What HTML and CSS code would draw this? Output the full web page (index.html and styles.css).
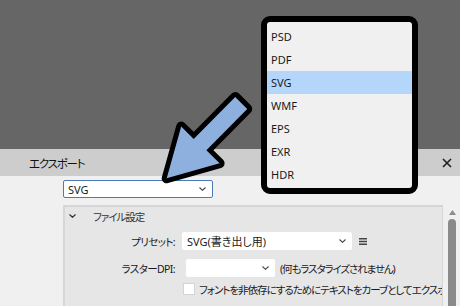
FILE: index.html
```html
<!DOCTYPE html>
<html lang="ja">
<head>
    <meta charset="UTF-8">
    <meta name="viewport" content="width=device-width, initial-scale=1.0">
    <title>エクスポート</title>
    <link rel="stylesheet" href="styles.css">
</head>
<body>
    <div class="backdrop"></div>
    <div class="dialog">
        <div class="titlebar">
            <span class="title">エクスポート</span>
            <svg class="close" width="10" height="10" viewBox="0 0 10 10">
                <path d="M1 1 L9 9 M9 1 L1 9" stroke="#1e1e1e" stroke-width="1.6"/>
            </svg>
        </div>
        <div class="content">
            <div class="select format">
                <span>SVG</span>
                <svg class="chev" width="7" height="4" viewBox="0 0 7 4"><path d="M0.5 0.5 L3.5 3.3 L6.5 0.5" fill="none" stroke="#444" stroke-width="1.1"/></svg>
            </div>
            <div class="settings">
                <div class="panel">
                    <div class="panel-head">
                        <svg class="head-chev" width="7" height="4" viewBox="0 0 7 4"><path d="M0.5 0.5 L3.5 3.3 L6.5 0.5" fill="none" stroke="#333" stroke-width="1.2"/></svg>
                        <span class="head-text">ファイル設定</span>
                    </div>
                    <div class="row row-preset">
                        <label class="label">プリセット:</label>
                        <div class="select preset">
                            <span>SVG(書き出し用)</span>
                            <svg class="chev" width="7" height="4" viewBox="0 0 7 4"><path d="M0.5 0.5 L3.5 3.3 L6.5 0.5" fill="none" stroke="#444" stroke-width="1.1"/></svg>
                        </div>
                        <svg class="menu" width="8" height="7" viewBox="0 0 8 7">
                            <path d="M0 0.75 H8 M0 3.5 H8 M0 6.25 H8" stroke="#444" stroke-width="1.3"/>
                        </svg>
                    </div>
                    <div class="row row-dpi">
                        <label class="label">ラスターDPI:</label>
                        <div class="select dpi">
                            <span></span>
                            <svg class="chev" width="7" height="4" viewBox="0 0 7 4"><path d="M0.5 0.5 L3.5 3.3 L6.5 0.5" fill="none" stroke="#444" stroke-width="1.1"/></svg>
                        </div>
                        <span class="note">(何もラスタライズされません)</span>
                    </div>
                    <div class="row row-check">
                        <span class="checkbox"></span>
                        <span class="check-text">フォントを非依存にするためにテキストをカーブとしてエクスポート</span>
                    </div>
                </div>
                <div class="scrollbar">
                    <svg class="up" width="7" height="5" viewBox="0 0 7 5"><path d="M0 5 L3.5 0 L7 5 Z" fill="#8c8c8c"/></svg>
                    <div class="thumb"></div>
                </div>
            </div>
        </div>
    </div>

    <ul class="dropdown">
        <li>PSD</li>
        <li>PDF</li>
        <li class="active">SVG</li>
        <li>WMF</li>
        <li>EPS</li>
        <li>EXR</li>
        <li>HDR</li>
    </ul>

    <svg class="pointer" width="460" height="306" viewBox="0 0 460 306">
        <polygon points="166.7,178.3 181.2,126.6 193.7,138.9 235.2,96.9 247.2,108.9 206.4,150.2 219.6,163.2"
                 fill="#8db0de" stroke="#000" stroke-width="10" stroke-linejoin="round" paint-order="stroke"/>
    </svg>
</body>
</html>
```

FILE: styles.css
```css
*{
    box-sizing: border-box;
}
body{
    margin: 0;
    width: 460px;
    height: 306px;
    overflow: hidden;
    background: #f0f0f0;
    font-family: "Noto Sans", "Noto Sans CJK JP", sans-serif;
    font-feature-settings: "palt";
    color: #1a1a1a;
    position: relative;
}
.backdrop{
    height: 149px;
    background: #666;
}

/* dialog */
.titlebar{
    height: 27px;
    background: #cdcdcd;
    display: flex;
    align-items: center;
    justify-content: space-between;
    padding: 0 8px 0 29px;
}
.title{
    font-size: 11.5px;
    letter-spacing: -1.2px;
    color: #111;
}
.close{
    margin-top: 1px;
}
.content{
    padding: 4px 0 0 63px;
}
.select{
    display: flex;
    align-items: center;
    justify-content: space-between;
    height: 18px;
    background: #fff;
    border-radius: 2px;
    padding: 0 6px 0 5px;
    font-size: 11px;
}
.format{
    width: 150px;
    border: 1px solid #4a7ab8;
    padding-left: 4px;
}
.settings{
    display: flex;
    margin-top: 7px;
    height: 101px;
}
.panel{
    flex: 1;
    background: #e6e6e6;
    border: 2px solid #d6d6d6;
    border-right-width: 1px;
    border-bottom: 0;
    overflow: hidden;
    font-size: 10.5px;
}
.panel-head{
    display: flex;
    align-items: center;
    height: 18px;
    padding-left: 4px;
    color: #333;
}
.head-chev{
    margin-right: 17px;
}
.head-text{
    letter-spacing: -1px;
}
.row{
    display: flex;
    align-items: center;
    white-space: nowrap;
}
.row-preset{
    margin-top: 7px;
    height: 18px;
}
.row-dpi{
    margin-top: 9px;
    height: 18px;
}
.row-check{
    margin-top: 6px;
    height: 12px;
    padding-left: 118px;
}
.label{
    width: 110px;
    text-align: right;
    letter-spacing: -0.6px;
}
.preset{
    width: 170px;
    margin-left: 7px;
}
.menu{
    margin-left: 7px;
}
.dpi{
    width: 89px;
    margin-left: 11px;
}
.note{
    margin-left: 5px;
    letter-spacing: -1.1px;
}
.checkbox{
    width: 12px;
    height: 12px;
    background: #fff;
    border: 1px solid #d4d4d4;
    flex: none;
}
.check-text{
    margin-left: 4px;
    letter-spacing: -1px;
}
.scrollbar{
    width: 17px;
    background: #f0f0f0;
    display: flex;
    flex-direction: column;
    align-items: center;
    padding-top: 5px;
}
.up{
    margin-left: 1px;
}
.thumb{
    width: 8px;
    margin: 4px 0 0 1px;
    flex: 1;
    background: #8a8a8a;
    border-radius: 4px 4px 0 0;
}

/* overlays */
.dropdown{
    position: absolute;
    left: 261px;
    top: 16px;
    width: 157px;
    height: 178px;
    margin: 0;
    padding: 3px 0 0;
    list-style: none;
    background: #f0f0f0;
    border: 6px solid #000;
    border-radius: 9px;
    font-size: 11px;
    color: #1a1a1a;
}
.dropdown li{
    height: 23px;
    line-height: 23px;
    padding-left: 4px;
}
.dropdown .active{
    background: #b4d6fb;
}
.pointer{
    position: absolute;
    left: 0;
    top: 0;
    pointer-events: none;
}
```
